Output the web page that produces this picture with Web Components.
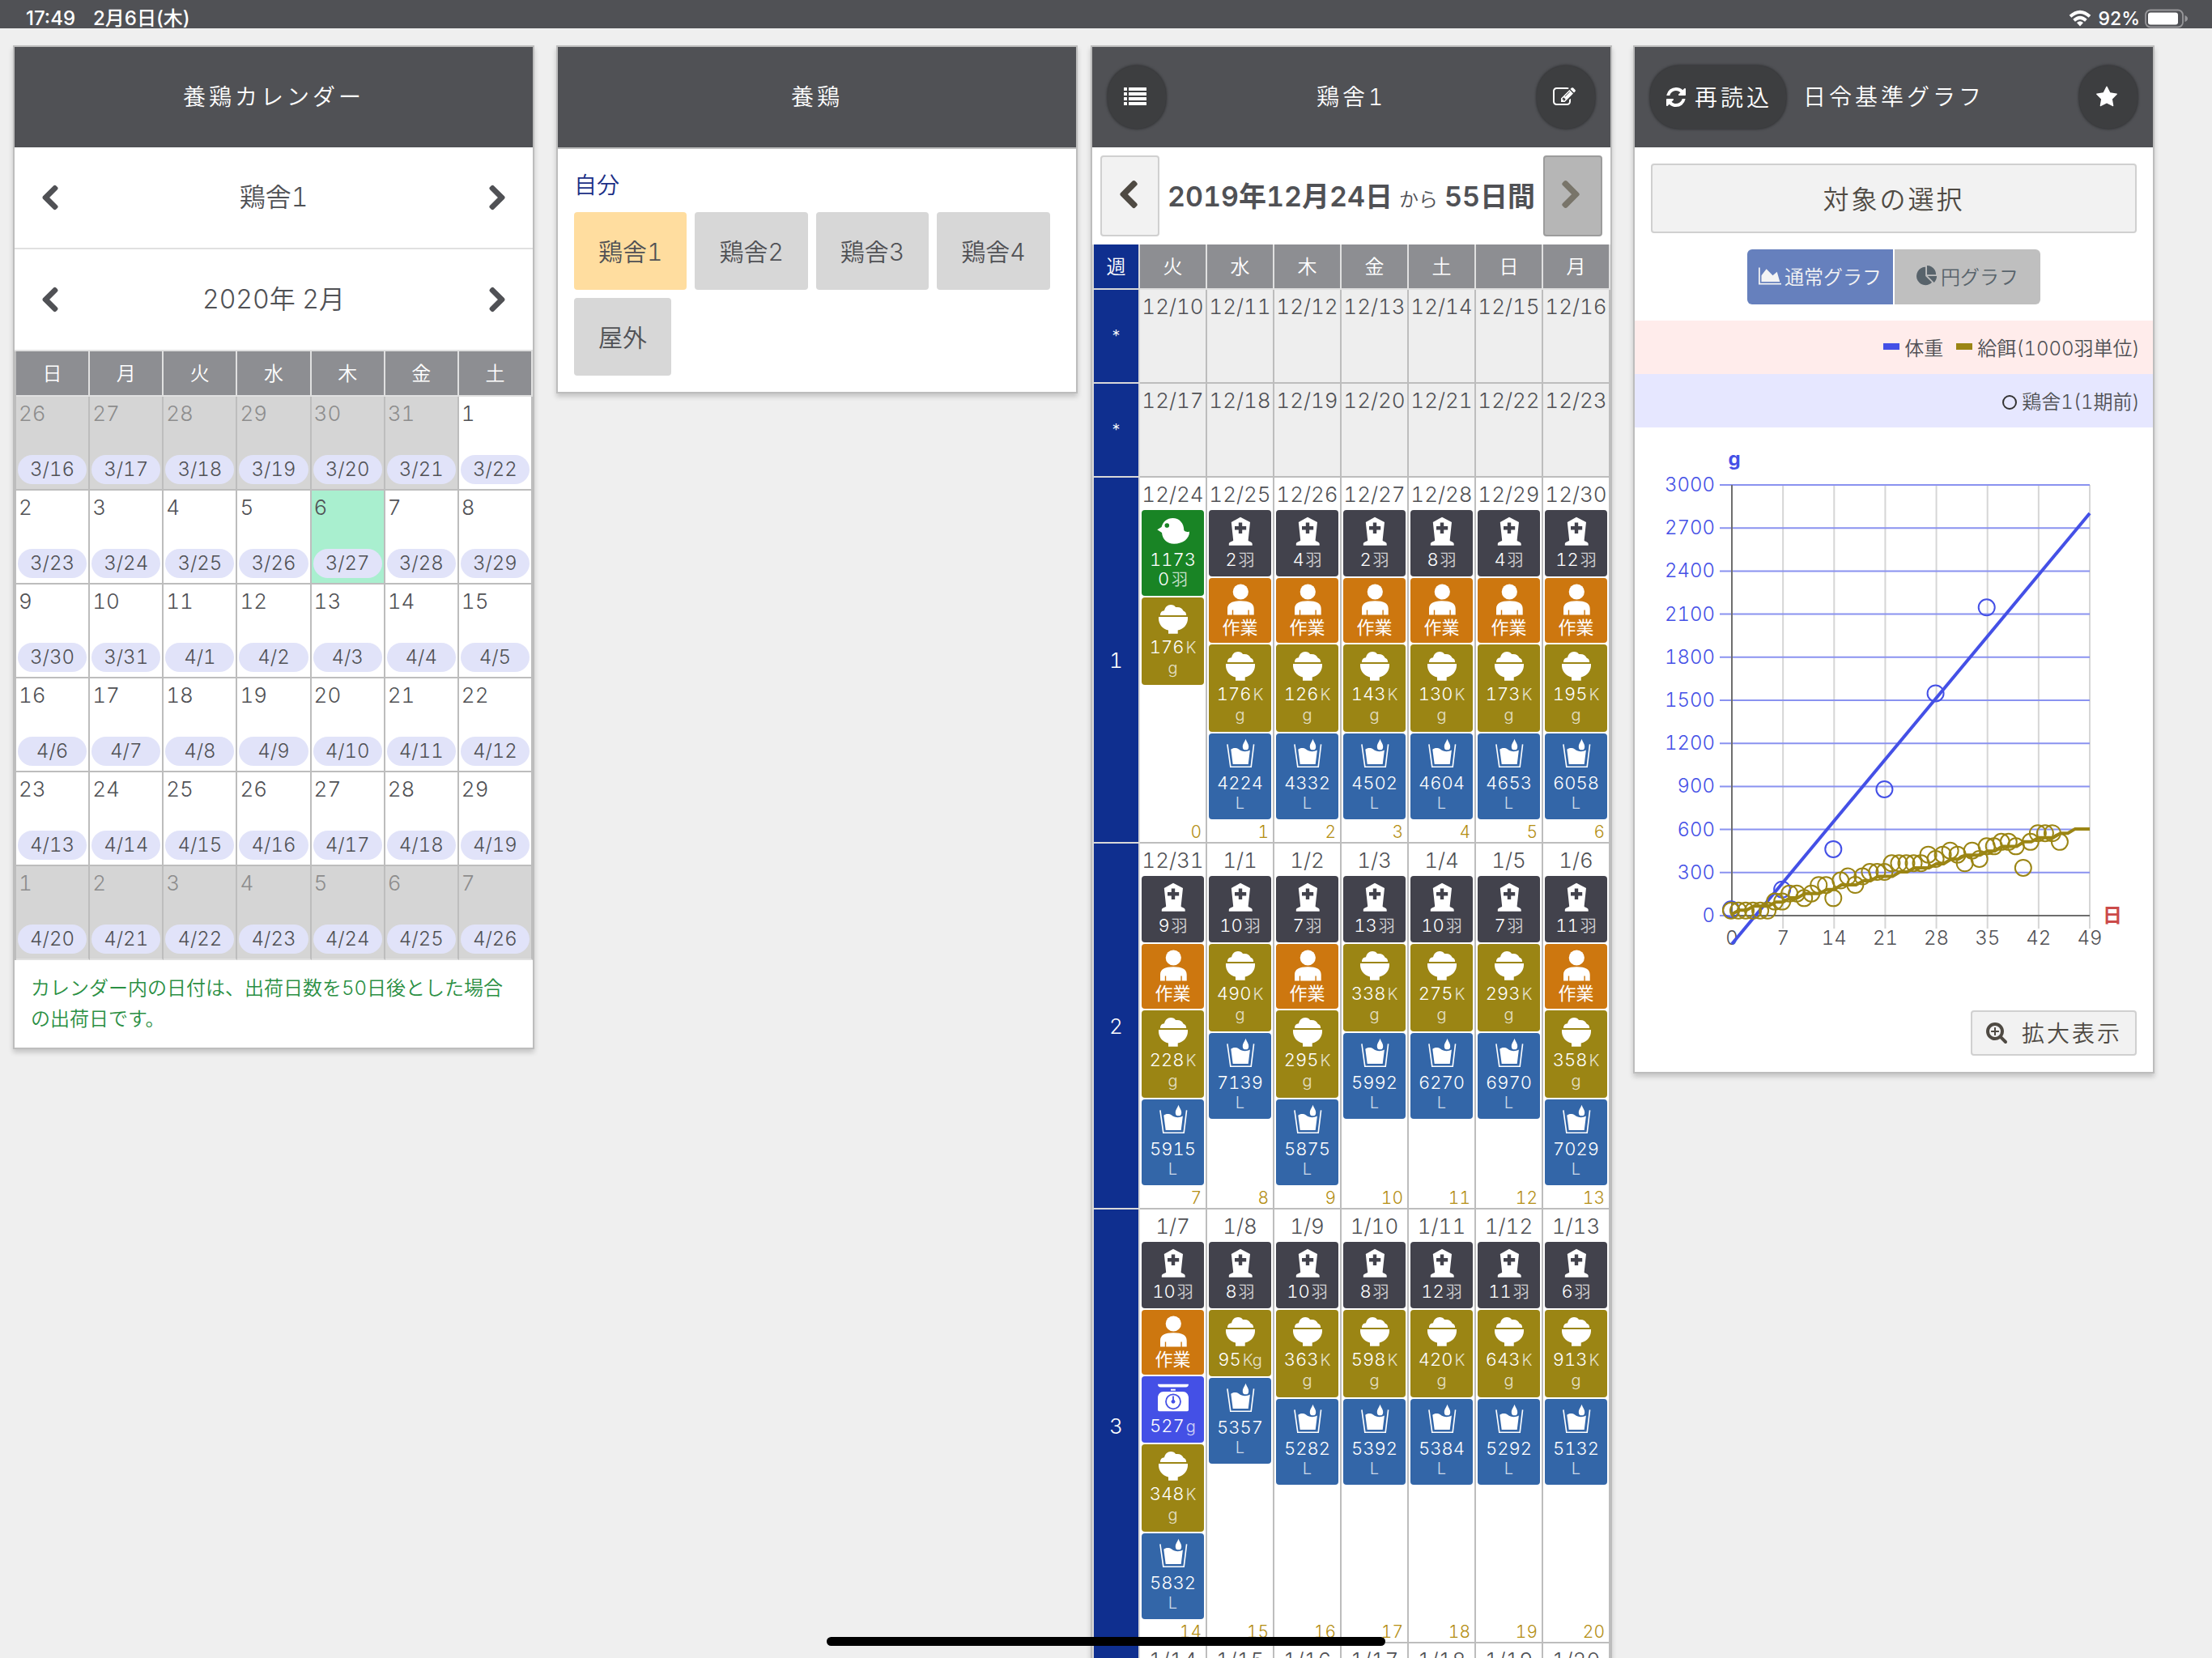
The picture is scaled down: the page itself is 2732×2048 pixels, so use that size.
<!DOCTYPE html>
<html lang="ja">
<head>
<meta charset="utf-8">
<title>養鶏カレンダー</title>
<style>
html, body { margin: 0; background: #efefef; }
body {
  font-family: Inter, "Noto Sans CJK JP", sans-serif;
  font-weight: 350;
  font-variant-numeric: tabular-nums;
  color: #505155;
  -webkit-font-smoothing: antialiased;
}
</style>
</head>
<body>
<poultry-app></poultry-app>

<template id="icon-defs">
  <svg data-icon="chevron-left" viewBox="0 0 320 512"><path stroke="currentColor" stroke-width="22" d="M34.52 239.03L228.87 44.69c9.37-9.37 24.57-9.37 33.94 0l22.67 22.67c9.36 9.36 9.37 24.52.04 33.9L131.49 256l154.02 154.75c9.34 9.38 9.32 24.54-.04 33.9l-22.67 22.67c-9.37 9.37-24.57 9.37-33.94 0L34.52 272.97c-9.37-9.37-9.37-24.57 0-33.94z"/></svg>
  <svg data-icon="chevron-right" viewBox="0 0 320 512"><path stroke="currentColor" stroke-width="22" d="M285.476 272.971L91.132 467.314c-9.373 9.373-24.569 9.373-33.941 0l-22.667-22.667c-9.357-9.357-9.375-24.522-.04-33.901L188.505 256 34.484 101.255c-9.335-9.379-9.317-24.544.04-33.901l22.667-22.667c9.373-9.373 24.569-9.373 33.941 0L285.475 239.03c9.373 9.372 9.373 24.568.001 33.941z"/></svg>
  <svg data-icon="list" viewBox="0 0 1792 1792"><path d="M0 1312q0-32 32-32h192q32 0 32 32v192q0 32-32 32h-192q-32 0-32-32zM0 928q0-32 32-32h192q32 0 32 32v192q0 32-32 32h-192q-32 0-32-32zM0 544q0-32 32-32h192q32 0 32 32v192q0 32-32 32h-192q-32 0-32-32zM0 160q0-32 32-32h192q32 0 32 32v192q0 32-32 32h-192q-32 0-32-32zM384 1312q0-32 32-32h1344q32 0 32 32v192q0 32-32 32h-1344q-32 0-32-32zM384 928q0-32 32-32h1344q32 0 32 32v192q0 32-32 32h-1344q-32 0-32-32zM384 544q0-32 32-32h1344q32 0 32 32v192q0 32-32 32h-1344q-32 0-32-32zM384 160q0-32 32-32h1344q32 0 32 32v192q0 32-32 32h-1344q-32 0-32-32z"/></svg>
  <svg data-icon="edit" viewBox="0 0 1792 1792"><path d="M888 1184l116-116-152-152-116 116v56h96v96h56zm440-720q-16-16-33 1l-350 350q-17 17-1 33t33-1l350-350q17-17 1-33zm80 594v190q0 119-84.5 203.5t-203.5 84.5h-832q-119 0-203.5-84.5t-84.5-203.5v-832q0-119 84.5-203.5t203.5-84.5h832q63 0 117 25 15 7 18 23 3 17-9 29l-49 49q-14 14-32 8-23-6-45-6h-832q-66 0-113 47t-47 113v832q0 66 47 113t113 47h832q66 0 113-47t47-113v-126q0-13 9-22l64-64q15-15 35-7t20 29zm-96-738l288 288-672 672h-288v-288zm444 132l-92 92-288-288 92-92q28-28 68-28t68 28l152 152q28 28 28 68t-28 68z"/></svg>
  <svg data-icon="refresh" viewBox="0 0 1792 1792"><path d="M1639 1056q0 5-1 7-64 268-268 434.5t-478 166.5q-146 0-282.5-55t-243.5-157l-129 129q-19 19-45 19t-45-19-19-45v-448q0-26 19-45t45-19h448q26 0 45 19t19 45-19 45l-137 137q71 66 161 102t187 36q134 0 250-65t186-179q11-17 53-117 8-23 30-23h192q13 0 22.5 9.5t9.5 22.5zm25-800v448q0 26-19 45t-45 19h-448q-26 0-45-19t-19-45 19-45l138-138q-148-137-349-137-134 0-250 65t-186 179q-11 17-53 117-8 23-30 23h-199q-13 0-22.5-9.5t-9.5-22.5v-7q65-268 270-434.5t480-166.5q146 0 284 55.5t245 156.5l130-129q19-19 45-19t45 19 19 45z"/></svg>
  <svg data-icon="star" viewBox="0 0 1792 1792"><path d="M1728 647q0 22-26 48l-363 354 86 500q1 7 1 20 0 21-10.5 35.5t-30.5 14.5q-19 0-40-12l-449-236-449 236q-22 12-40 12-21 0-31.5-14.5t-10.5-35.5q0-6 2-20l86-500-364-354q-25-27-25-48 0-37 56-46l502-73 225-455q19-41 49-41t49 41l225 455 502 73q56 9 56 46z"/></svg>
  <svg data-icon="area" viewBox="0 0 2048 1792"><path d="M2048 1536v128h-2048v-1536h128v1408h1920zm-384-1024l256 896h-1664v-576l448-576 576 576z"/></svg>
  <svg data-icon="pie" viewBox="0 0 1792 1792"><path d="M768 890l546 546q-106 108-247.5 168t-298.5 60q-209 0-385.5-103t-279.5-279.5-103-385.5 103-385.5 279.5-279.5 385.5-103v762zm187 6h773q0 157-60 298.5t-168 247.5zm709-128h-768v-768q209 0 385.5 103t279.5 279.5 103 385.5z"/></svg>
  <svg data-icon="zoom" viewBox="0 0 1792 1792"><path d="M1088 800v64q0 13-9.5 22.5t-22.5 9.5h-224v224q0 13-9.5 22.5t-22.5 9.5h-64q-13 0-22.5-9.5t-9.5-22.5v-224h-224q-13 0-22.5-9.5t-9.5-22.5v-64q0-13 9.5-22.5t22.5-9.5h224v-224q0-13 9.5-22.5t22.5-9.5h64q13 0 22.5 9.5t9.5 22.5v224h224q13 0 22.5 9.5t9.5 22.5zm128 32q0-185-131.5-316.5t-316.5-131.5-316.5 131.5-131.5 316.5 131.5 316.5 316.5 131.5 316.5-131.5 131.5-316.5zm512 832q0 53-37.5 90.5t-90.5 37.5q-54 0-90-38l-343-342q-179 124-399 124-143 0-273.5-55.5t-225-150-150-225-55.5-273.5 55.5-273.5 150-225 225-150 273.5-55.5 273.5 55.5 225 150 150 225 55.5 273.5q0 220-124 399l343 343q37 37 37 90z"/></svg>
  <svg data-icon="chick" viewBox="0 0 77 50"><path fill-rule="evenodd" d="M19.3 24.3L24.6 21C26.3 14.4 31.5 10 38.5 10C46.5 10 52.2 16 52.3 25C54 27.2 57 27.3 59 26.4C59.5 35 51 41.7 40 41.7C31.5 41.7 25.8 36.5 25 28ZM28.5 19a2.8 2.8 0 1 0 5.6 0a2.8 2.8 0 1 0 -5.6 0Z"/></svg>
  <svg data-icon="tomb" viewBox="0 0 77 50"><path fill-rule="evenodd" d="M39 8.7L51 15L48.6 37.5C49 39.3 53.7 38.8 53.7 42V43.8H24.8V42C24.8 38.8 29.5 39.3 30.2 37.5L27.8 15ZM36.8 15.6V20H32V24.4H36.8V29H41.2V24.4H46.2V20H41.2V15.6Z"/></svg>
  <svg data-icon="person" viewBox="0 0 77 50"><circle cx="39.3" cy="17" r="9.6"/><path d="M23 45.4V38C23 31 29 28.3 39.3 28.3S55.7 31 55.7 38V45.4H49.8V39.4H48.4V45.4H30.2V39.4H28.8V45.4Z"/></svg>
  <svg data-icon="bowl" viewBox="0 0 77 50"><path d="M23 22C23 18.2 25 16.6 28 16.2C29 12 32 9 36 9C38.8 9 41 10.2 42 12C47 11.4 50.3 13 51.5 16.5C54 17.5 55.2 19.3 55.2 22ZM21 24H57C57.6 32 53 38.5 44.7 40.6V44.8H33V40.6C25 38.5 20.4 32 21 24Z"/></svg>
  <svg data-icon="water" viewBox="0 0 77 50"><path fill="none" stroke="currentColor" stroke-width="1.6" d="M22.9 13.3L26.8 41.2H52.2L55.6 13.3"/><path d="M27.3 19.8C30 17.6 34 17.6 37 19.6C41 22.6 46 23.4 50.9 20.6L48.7 38H29.7ZM45.5 6.8C46.6 10.6 49.2 12.6 49.2 16.4A3.7 3.9 0 0 1 41.8 16.4C41.8 12.6 44.4 10.6 45.5 6.8Z"/></svg>
  <svg data-icon="scale" viewBox="0 0 77 50"><path fill-rule="evenodd" d="M20 9.7H58C58 12 56.8 13.4 54.5 13.4H23.5C21.2 13.4 20 12 20 9.7ZM36 15.7H41.8V17.8H36ZM27 19H51C55 19 58 22.5 58 26.5V41.5Q58 43.2 56.3 43.2H21.7Q20 43.2 20 41.5V26.5C20 22.5 23 19 27 19Z"/><g fill="none" stroke="#4450e6" stroke-width="1.8"><circle cx="39" cy="31.3" r="9"/><path d="M39 31.3V24.5"/></g><circle cx="39" cy="31.3" r="2.4" fill="#4450e6"/></svg>
</template>

<script>
const iconDefs = document.getElementById('icon-defs').content;

/* Shared reset for native controls placed inside shadow roots */
const CONTROL_CSS = `
  *, *::before, *::after { box-sizing: border-box; }
  button { font: inherit; font-variant-numeric: inherit; color: inherit; border: 0; background: none; padding: 0; margin: 0; cursor: pointer; }
`;

class BaseElement extends HTMLElement {
  constructor() {
    super();
    this.attachShadow({ mode: 'open' });
  }
  connectedCallback() {
    this.shadowRoot.innerHTML = `<style>${CONTROL_CSS}${this.styles()}</style>${this.markup()}`;
  }
  styles() { return ''; }
  markup() { return '<slot></slot>'; }
}

class AppIcon extends BaseElement {
  styles() {
    return `:host { display: inline-block; width: 32px; height: 32px; }
            svg { display: block; width: 100%; height: 100%; fill: currentColor; }`;
  }
  markup() {
    const svg = iconDefs.querySelector(`[data-icon="${this.getAttribute('name')}"]`);
    return svg.outerHTML;
  }
}
customElements.define('app-icon', AppIcon);

class StatusBar extends BaseElement {
  styles() {
    return `:host { display: flex; justify-content: space-between; align-items: flex-end; height: 35px;
              padding: 0 29px 0 32px; background: #505155; color: #fff;
              font-size: 24px; line-height: 24px; font-weight: 500; font-variant-numeric: normal; }
            .group { display: flex; align-items: center; }
            .left { gap: 22px; }
            .right { font-size: 23px; }
            .wifi { width: 28px; height: 22px; margin-right: 8px; }
            .battery { width: 56px; height: 24px; margin-left: 4px; }
            svg { display: block; }`;
  }
  markup() {
    return `<div class="group left"><span>17:49</span><span>2月6日(木)</span></div>
      <div class="group right">
        <svg class="wifi" viewBox="0 0 28 22" fill="none" stroke="#fff" stroke-width="4">
          <path d="M2 8.2Q14-2.6 26 8.2"/><path d="M6.6 13.2Q14 6.6 21.4 13.2"/><path d="M10 15.9Q14 12.6 18 15.9L14 20.6Z" fill="#fff" stroke="none"/>
        </svg>
        <span>92%</span>
        <svg class="battery" viewBox="0 0 56 24">
          <rect x="3" y="1.5" width="46" height="21" rx="6" fill="none" stroke="#97979a" stroke-width="1.8"/>
          <rect x="6" y="4.5" width="37" height="15" rx="3" fill="#fff"/>
          <path d="M51.5 8q3.5 1.5 3.5 4t-3.5 4z" fill="#97979a"/>
        </svg>
      </div>`;
  }
}
customElements.define('status-bar', StatusBar);

class PanelCard extends BaseElement {
  styles() {
    return `:host { display: block; flex: 1 1 0; min-width: 0; background: #fff; border: 2px solid #bdbdbd;
              box-shadow: 0 4px 6px rgba(0,0,0,.18); }
            header { display: grid; grid-template-columns: 1fr auto 1fr; align-items: center; height: 124px;
              padding: 0 19px; background: #505155; color: #fff; }
            h2 { margin: 0; font-size: 28px; line-height: 40px; font-weight: inherit; letter-spacing: 4px; white-space: nowrap; }
            .end { justify-self: end; }`;
  }
  markup() {
    return `<header><div><slot name="start"></slot></div><h2>${this.getAttribute('heading')}</h2><div class="end"><slot name="end"></slot></div></header><slot></slot>`;
  }
}
customElements.define('panel-card', PanelCard);

class PillButton extends BaseElement {
  styles() {
    return `:host { display: block; color: #fff; }
            button { display: flex; align-items: center; justify-content: center; gap: 9px; min-width: 72px; height: 78px; padding: 0 20px 0 16px;
              border-radius: 36px; background: #3d3e40; box-shadow: 0 0 3px 1px #333436;
              font-size: 28px; letter-spacing: 4px; white-space: nowrap; }
            app-icon { width: 28px; height: 28px; }
            button.text { padding: 0 17px 0 18px; }
            span { padding-bottom: 3px; }`;
  }
  markup() {
    const text = this.textContent.trim();
    return `<button type="button" class="${text ? 'text' : ''}" aria-label="${this.getAttribute('label')}"><app-icon name="${this.getAttribute('icon')}"></app-icon>${text ? '<span>' + text + '</span>' : ''}</button>`;
  }
}
customElements.define('pill-button', PillButton);

class StepRow extends BaseElement {
  styles() {
    return `:host { display: flex; align-items: center; justify-content: space-between; height: 126px; padding: 0 27px;
              border-bottom: 2px solid #e0e0e0; font-size: 32px; line-height: 40px; }
            button { width: 34px; height: 60px; display: grid; place-items: center; color: #505155; }
            app-icon { width: 22px; height: 34px; }`;
  }
  markup() {
    return `<button type="button" aria-label="前へ"><app-icon name="chevron-left"></app-icon></button>
      <span>${this.getAttribute('label')}</span>
      <button type="button" aria-label="次へ"><app-icon name="chevron-right"></app-icon></button>`;
  }
}
customElements.define('step-row', StepRow);

class ShipCalendar extends BaseElement {
  styles() {
    return `:host { display: block; }
      table { width: 100%; table-layout: fixed; border-spacing: 0; border-left: 2px solid #bdbdbd; }
      th { height: 56px; padding: 0 0 3px; background: #8d8e92; color: #fff; font-size: 24px; font-weight: inherit;
        border-right: 2px solid #e0e0e0; border-bottom: 2px solid #e0e0e0; }
      td { height: 116px; padding: 3px 2px 6px; vertical-align: top; border-right: 2px solid #bdbdbd; border-bottom: 2px solid #bdbdbd; }
      tr:last-child td { border-bottom-color: #e0e0e0; }
      td.out { background: #d5d5d5; }
      td.out .day { color: #8d8d8d; }
      td.today { background: #a9efcf; }
      .day { font-size: 26px; line-height: 36px; height: 69px; padding-left: 1px; }
      .ship { font-size: 24px; line-height: 36px; height: 36px; border-radius: 18px; background: #e1e3f9; text-align: center; }
      p { margin: 0; padding: 16px 20px 16px; height: 108px; color: #2a8f43; font-size: 24px; line-height: 38px; }`;
  }
  markup() {
    const first = Date.UTC(2020, 0, 26), ship = Date.UTC(2020, 2, 16), DAY = 864e5;
    let rows = '';
    for (let w = 0; w < 6; w++) {
      rows += '<tr>';
      for (let d = 0; d < 7; d++) {
        const i = w * 7 + d;
        const date = new Date(first + i * DAY), out = new Date(ship + i * DAY);
        const cls = date.getUTCMonth() !== 1 ? 'out' : date.getUTCDate() === 6 ? 'today' : '';
        rows += `<td class="${cls}"><div class="day">${date.getUTCDate()}</div><div class="ship">${out.getUTCMonth() + 1}/${out.getUTCDate()}</div></td>`;
      }
      rows += '</tr>';
    }
    return `<table><thead><tr>${[...'日月火水木金土'].map(c => `<th scope="col">${c}</th>`).join('')}</tr></thead><tbody>${rows}</tbody></table>
      <p>カレンダー内の日付は、出荷日数を50日後とした場合の出荷日です。</p>`;
  }
}
customElements.define('ship-calendar', ShipCalendar);

class HousePicker extends BaseElement {
  styles() {
    return `:host { display: block; border-top: 2px solid #bdbdbd; padding: 24px 20px 20px; }
      h3 { margin: 0 0 12px; font-size: 28px; line-height: 42px; font-weight: inherit; color: #1b2f86; }
      .list { display: flex; flex-wrap: wrap; gap: 10px; }
      button { height: 96px; padding: 0 30px 3px; border-radius: 4px; background: #d7d7d7; font-size: 30px; }
      button[aria-pressed="true"] { background: #ffdd9f; }`;
  }
  markup() {
    return `<h3>自分</h3><div class="list">${['鶏舎1', '鶏舎2', '鶏舎3', '鶏舎4', '屋外'].map((n, i) => `<button type="button" aria-pressed="${i === 0}">${n}</button>`).join('')}</div>`;
  }
}
customElements.define('house-picker', HousePicker);

class EventTile extends BaseElement {
  styles() {
    return `:host { display: block; padding-bottom: 9px; border-radius: 4px; color: #fff; text-align: center; font-size: 22px; line-height: 24px; white-space: nowrap; }
      :host([kind="chick"]) { background: #198425; }
      :host([kind="tomb"]) { background: #42424c; }
      :host([kind="person"]) { background: #cd770f; padding-bottom: 7px; font-weight: 400; }
      :host([kind="bowl"]) { background: #9b8514; }
      :host([kind="water"]) { background: #3366a8; }
      :host([kind="scale"]) { background: #4450e6; }
      app-icon { display: block; width: 100%; height: 50px; margin-bottom: -1px; }
      .unit { font-size: 20px; line-height: 16px; opacity: .75; margin-left: 2px; }
      .next { display: block; }
      .next .unit { margin-left: 0; }
      :host([kind="bowl"]) .next { line-height: 26px; }
      .next .unit.gap { margin-left: 3px; }`;
  }
  markup() {
    const kind = this.getAttribute('kind'), v = this.getAttribute('value');
    const unit = t => `<span class="unit">${t}</span>`;
    let text;
    if (kind === 'person') text = '作業';
    else if (kind === 'chick') text = `${v.slice(0, 4)}<span class="next">${v.slice(4)}<span class="unit gap">羽</span></span>`;
    else if (kind === 'tomb') text = v + unit('羽');
    else if (kind === 'scale') text = v + unit('g');
    else if (kind === 'water') text = `${v}<span class="next">${unit('L')}</span>`;
    else text = v.length < 3 ? v + unit('Kg') : `${v}${unit('K')}<span class="next">${unit('g')}</span>`;
    return `<app-icon name="${kind}"></app-icon><div>${text}</div>`;
  }
}
customElements.define('event-tile', EventTile);

/* t: dead birds, w: work, s: weight, f: feed, l: water, c: chicks in */
const WEEKS = [
  { n: '*', start: '2019-12-10' },
  { n: '*', start: '2019-12-17' },
  { n: 1, start: '2019-12-24', days: ['c11730 f176', 't2 w f176 l4224', 't4 w f126 l4332', 't2 w f143 l4502', 't8 w f130 l4604', 't4 w f173 l4653', 't12 w f195 l6058'] },
  { n: 2, start: '2019-12-31', days: ['t9 w f228 l5915', 't10 f490 l7139', 't7 w f295 l5875', 't13 f338 l5992', 't10 f275 l6270', 't7 f293 l6970', 't11 w f358 l7029'] },
  { n: 3, start: '2020-01-07', days: ['t10 w s527 f348 l5832', 't8 f95 l5357', 't10 f363 l5282', 't8 f598 l5392', 't12 f420 l5384', 't11 f643 l5292', 't6 f913 l5132'] },
  { n: '', start: '2020-01-14', open: true }
];
const KIND = { c: 'chick', t: 'tomb', w: 'person', s: 'scale', f: 'bowl', l: 'water' };

class FlockDiary extends BaseElement {
  styles() {
    return `:host { display: block; }
      nav { display: flex; align-items: center; justify-content: space-between; height: 120px; padding: 0 10px; }
      nav button { width: 73px; height: 100px; padding: 0 4px 4px 0; display: grid; place-items: center; border: 2px solid #d0d0d0; border-radius: 4px; background: #f2f2f2; color: #4f4a43; }
      nav button.on { background: #b6b6b6; border-color: #9c9c9c; color: #79756a; }
      nav app-icon { width: 24px; height: 38px; }
      .range { padding-top: 6px; font-size: 34px; line-height: 40px; white-space: nowrap; }
      .range b { font-weight: 600; }
      .range small { font-size: 24px; margin: 0 8px; }
      table { width: 100%; table-layout: fixed; border-spacing: 0; border-left: 2px solid #d8d8d8; }
      .wk { width: 57px; }
      th, td { padding: 0; font-weight: inherit; border-right: 2px solid #bdbdbd; border-bottom: 2px solid #bdbdbd; }
      thead th { height: 56px; padding-bottom: 3px; font-size: 24px; color: #fff; background: #8d8e92; border-color: #e0e0e0; }
      tr > th:first-child { background: #0f2f8f; color: #fff; border-color: #d8d8d8; font-size: 26px; }
      tr.pre > th:first-child { font-size: 20px; }
      thead tr > th:first-child { font-size: 24px; }
      td { height: 1px; vertical-align: top; }
      tr.pre { height: 116px; }
      tr.pre td { background: #eee; }
      .cell { display: flex; flex-direction: column; gap: 2px; height: 100%; padding: 0 2px; }
      .date { font-size: 26px; line-height: 42px; height: 40px; margin-bottom: -2px; text-align: center; white-space: nowrap; }
      .age { flex: 1 0 auto; display: flex; align-items: flex-end; justify-content: flex-end; min-height: 26px; padding-right: 3px;
        font-size: 21px; line-height: 24px; color: #b48e12; }`;
  }
  markup() {
    let age = 0;
    const rows = WEEKS.map(w => {
      const start = Date.parse(w.start);
      let cells = '';
      for (let d = 0; d < 7; d++) {
        const t = new Date(start + d * 864e5);
        const tiles = w.days ? w.days[d].split(' ').map(e => `<event-tile kind="${KIND[e[0]]}" value="${e.slice(1)}"></event-tile>`).join('') : '';
        cells += `<td><div class="cell"><div class="date">${t.getUTCMonth() + 1}/${t.getUTCDate()}</div>${tiles}${w.days ? `<div class="age">${age++}</div>` : ''}</div></td>`;
      }
      return `<tr class="${w.days || w.open ? '' : 'pre'}"><th scope="row">${w.n}</th>${cells}</tr>`;
    }).join('');
    return `<nav>
        <button type="button" aria-label="前の期間"><app-icon name="chevron-left"></app-icon></button>
        <span class="range"><b>2019年12月24日</b><small>から</small><b>55日間</b></span>
        <button type="button" class="on" aria-label="次の期間"><app-icon name="chevron-right"></app-icon></button>
      </nav>
      <table><thead><tr><th class="wk" scope="col">週</th>${[...'火水木金土日月'].map(c => `<th scope="col">${c}</th>`).join('')}</tr></thead><tbody>${rows}</tbody></table>`;
  }
}
customElements.define('flock-diary', FlockDiary);

class GrowthChart extends BaseElement {
  styles() {
    return `:host { display: block; }
      svg { display: block; width: 100%; height: auto; font-size: 24px; }`;
  }
  markup() {
    const x = d => 120 + d * 442 / 49, y = v => 603 - v * 532 / 3000;
    let g = '';
    for (let d = 7; d <= 49; d += 7) g += `<path d="M${x(d)} 71V619" stroke="#d6d6d6" stroke-width="2"/>`;
    for (let v = 0; v <= 3000; v += 300) {
      g += `<path d="M105 ${y(v)}H562" stroke="#8a92f0" stroke-width="2"/><text x="99" y="${y(v) + 8}" text-anchor="end" fill="#4450e6">${v}</text>`;
    }
    g += '<path d="M120 71V603H562" fill="none" stroke="#6e6e6e" stroke-width="2"/>';
    for (let d = 0; d <= 49; d += 7) g += `<text x="${x(d)}" y="639" text-anchor="middle" fill="#505155">${d}</text>`;
    const line = [10, 38, 38, 66, 66, 66, 95, 95, 124, 124, 154, 154, 154, 182, 182, 214, 214, 214, 243, 243, 273, 273, 273, 304, 304, 333, 333, 333, 361, 361, 393, 393, 422, 422, 422, 450, 450, 482, 482, 482, 514, 514, 543, 543, 543, 574, 574, 604, 604, 604];
    const feed = [35, 35, 35, 35, 35, 35, 98, 98, 154, 154, 122, 154, 213, 213, 122, 245, 273, 214, 273, 304, 304, 304, 365, 365, 365, 365, 365, 425, 395, 425, 453, 425, 365, 453, 395, 483, 483, 514, 514, 483, 333, 514, 574, 574, 574, 514];
    const weight = [[0, 44], [7, 182], [14, 463], [21, 880], [28, 1548], [35, 2147]];
    g += `<path d="M${x(0)} 638L${x(49)} 106" stroke="#4450e6" stroke-width="4"/>`;
    g += weight.map(p => `<circle cx="${x(p[0]) - 1}" cy="${y(p[1])}" r="10" fill="none" stroke="#4450e6" stroke-width="2"/>`).join('');
    g += `<polyline points="${line.map((v, d) => `${x(d)},${y(v)}`).join(' ')}" fill="none" stroke="#9b8514" stroke-width="4"/>`;
    g += feed.map((v, d) => `<circle cx="${x(d) - 1}" cy="${y(v)}" r="10" fill="none" stroke="#9b8514" stroke-width="2"/>`).join('');
    g += `<text x="123" y="47" text-anchor="middle" font-weight="700" fill="#4450e6">g</text><text x="590" y="611" text-anchor="middle" font-weight="700" fill="#cb4a4a">日</text>`;
    return `<svg viewBox="0 0 640 720" role="img" aria-label="日令基準グラフ">${g}</svg>`;
  }
}
customElements.define('growth-chart', GrowthChart);

class GraphPanel extends BaseElement {
  styles() {
    return `:host { display: block; }
      .select { display: block; width: calc(100% - 40px); height: 86px; margin: 20px 20px 20px; padding-bottom: 3px; border: 2px solid #d0d0d0; border-radius: 4px;
        background: #f2f2f2; color: #4f4a43; font-size: 32px; letter-spacing: 3px; }
      .toggle { display: flex; justify-content: center; gap: 2px; margin-bottom: 20px; }
      .toggle button { display: flex; align-items: center; justify-content: center; gap: 4px; width: 180px; height: 68px; padding-bottom: 3px; font-size: 24px; background: #bfbfbf; color: #58636b; border-radius: 0 6px 6px 0; white-space: nowrap; }
      .toggle button[aria-pressed="true"] { background: #6680bd; color: #f4f4f4; border-radius: 6px 0 0 6px; }
      .toggle app-icon { width: 26px; height: 26px; }
      .toggle app-icon[name="area"] { width: 28px; }
      .legend { display: flex; align-items: center; justify-content: flex-end; gap: 16px; height: 66px; padding: 4px 16px 0; background: #ffeceb; font-size: 24px; line-height: 36px; }
      .legend.blue { background: #e6e7ff; }
      .key { display: flex; align-items: center; gap: 6px; }
      .bar { width: 20px; height: 8px; margin-bottom: 6px; background: #4450e6; }
      .bar.feed { background: #9b8514; }
      .ring { width: 18px; height: 18px; border: 2px solid #333; border-radius: 50%; }
      .foot { display: flex; justify-content: flex-end; padding: 0 20px 20px; }
      .foot button { display: flex; align-items: center; gap: 17px; height: 56px; padding: 0 16px 2px; border: 2px solid #d0d0d0; border-radius: 4px; background: #f2f2f2; color: #4f4a43; font-size: 28px; letter-spacing: 3px; }
      .foot app-icon { width: 28px; height: 28px; }`;
  }
  markup() {
    return `<button type="button" class="select">対象の選択</button>
      <div class="toggle">
        <button type="button" aria-pressed="true"><app-icon name="area"></app-icon><span>通常グラフ</span></button>
        <button type="button" aria-pressed="false"><app-icon name="pie"></app-icon><span>円グラフ</span></button>
      </div>
      <div class="legend"><span class="key"><i class="bar"></i>体重</span><span class="key"><i class="bar feed"></i>給餌(1000羽単位)</span></div>
      <div class="legend blue"><span class="key"><i class="ring"></i>鶏舎1(1期前)</span></div>
      <growth-chart></growth-chart>
      <div class="foot"><button type="button"><app-icon name="zoom"></app-icon><span>拡大表示</span></button></div>`;
  }
}
customElements.define('graph-panel', GraphPanel);

class PoultryApp extends BaseElement {
  styles() {
    return `:host { display: block; height: 100vh; overflow: hidden; }
      main { display: flex; align-items: flex-start; gap: 16px; padding: 21px 71px 0 16px; }
      .picker { margin-left: 11px; }
      .graph { margin-left: 10px; }
      .home { position: fixed; left: 50%; bottom: 15px; width: 690px; height: 11px; margin-left: -345px; border-radius: 6px; background: #000; }`;
  }
  markup() {
    return `<status-bar></status-bar>
      <main>
        <panel-card heading="養鶏カレンダー">
          <step-row label="鶏舎1"></step-row>
          <step-row label="2020年 2月"></step-row>
          <ship-calendar></ship-calendar>
        </panel-card>
        <panel-card class="picker" heading="養鶏"><house-picker></house-picker></panel-card>
        <panel-card heading="鶏舎1">
          <pill-button slot="start" icon="list" label="一覧"></pill-button>
          <pill-button slot="end" icon="edit" label="編集"></pill-button>
          <flock-diary></flock-diary>
        </panel-card>
        <panel-card class="graph" heading="日令基準グラフ">
          <pill-button slot="start" icon="refresh" label="再読込">再読込</pill-button>
          <pill-button slot="end" icon="star" label="お気に入り"></pill-button>
          <graph-panel></graph-panel>
        </panel-card>
      </main>
      <div class="home"></div>`;
  }
}
customElements.define('poultry-app', PoultryApp);
</script>
</body>
</html>
